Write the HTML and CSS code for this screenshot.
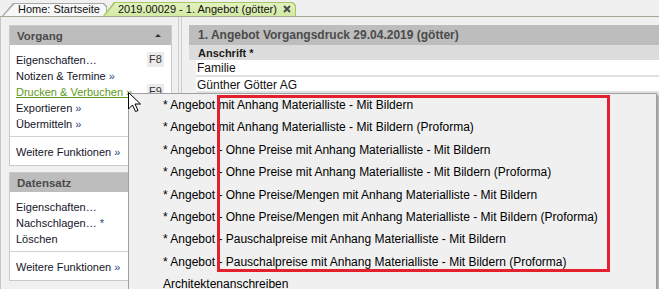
FILE: index.html
```html
<!DOCTYPE html>
<html lang="de">
<head>
    <meta charset="UTF-8">
    <title>2019.00029 - 1. Angebot (götter)</title>
    <link rel="stylesheet" href="styles.css">
</head>
<body>
    <div class="tabs">
        <div class="tab">Home: Startseite</div>
        <div class="tab tab-active">2019.00029 - 1. Angebot (götter)
            <svg class="tab-close" width="8" height="8" viewBox="0 0 8 8"><path d="M1 1 L7 7 M7 1 L1 7" stroke="#4a4a4a" stroke-width="2"/></svg>
        </div>
    </div>

    <div class="main">
        <div class="sidebar">
            <div class="box">
                <div class="box-head">Vorgang <span class="collapse"></span></div>
                <ul class="box-list">
                    <li>Eigenschaften… <span class="key">F8</span></li>
                    <li>Notizen &amp; Termine <span class="more">»</span></li>
                    <li class="hover">Drucken &amp; Verbuchen »<span class="key">F9</span></li>
                    <li>Exportieren <span class="more">»</span></li>
                    <li>Übermitteln <span class="more">»</span></li>
                </ul>
                <ul class="box-list box-foot">
                    <li>Weitere Funktionen <span class="more">»</span></li>
                </ul>
            </div>
            <div class="box">
                <div class="box-head">Datensatz</div>
                <ul class="box-list">
                    <li>Eigenschaften…</li>
                    <li>Nachschlagen… <span class="more">*</span></li>
                    <li>Löschen</li>
                </ul>
                <ul class="box-list box-foot">
                    <li>Weitere Funktionen <span class="more">»</span></li>
                </ul>
            </div>
        </div>

        <div class="content">
            <div class="pane-head">1. Angebot Vorgangsdruck 29.04.2019 (götter)</div>
            <div class="field-label">Anschrift *</div>
            <div class="fields">
                <div class="field">Familie</div>
                <div class="field">Günther Götter AG</div>
            </div>
        </div>
    </div>

    <!-- Kontextmenü "Drucken & Verbuchen" -->
    <ul class="menu">
        <li>* Angebot mit Anhang Materialliste - Mit Bildern</li>
        <li>* Angebot mit Anhang Materialliste - Mit Bildern (Proforma)</li>
        <li>* Angebot - Ohne Preise mit Anhang Materialliste - Mit Bildern</li>
        <li>* Angebot - Ohne Preise mit Anhang Materialliste - Mit Bildern (Proforma)</li>
        <li>* Angebot - Ohne Preise/Mengen mit Anhang Materialliste - Mit Bildern</li>
        <li>* Angebot - Ohne Preise/Mengen mit Anhang Materialliste - Mit Bildern (Proforma)</li>
        <li>* Angebot - Pauschalpreise mit Anhang Materialliste - Mit Bildern</li>
        <li>* Angebot - Pauschalpreise mit Anhang Materialliste - Mit Bildern (Proforma)</li>
        <li>Architektenanschreiben</li>
    </ul>

    <div class="highlight"></div>

    <svg class="cursor" width="13" height="21" viewBox="0 0 13 21">
        <path d="M0.5 0.5 L0.5 17 L4.5 13 L7.5 19.5 L10 18.5 L7 12 L12.5 12 Z" fill="#fff" stroke="#000" stroke-width="1" stroke-linejoin="miter"/>
    </svg>
</body>
</html>
```

FILE: styles.css
```css
body {
    margin: 0;
    width: 659px;
    height: 289px;
    overflow: hidden;
    position: relative;
    background-color: #f0f0f0;
    font-family: "Liberation Sans", Arial, sans-serif;
    font-size: 11px;
    color: #111;
}

ul {
    list-style: none;
    margin: 0;
    padding: 0;
}

/* Tabs */
.tabs {
    height: 16px;
    border-bottom: 1px solid #a9a596;
    display: flex;
    align-items: flex-end;
    padding-left: 2px;
}

.tab {
    position: relative;
    z-index: 0;
    height: 13px;
    line-height: 13px;
    padding: 0 7px 0 16px;
    white-space: nowrap;
}

.tab::before,
.tab::after {
    content: "";
    position: absolute;
    z-index: -1;
    clip-path: polygon(0 100%, 11px 0, calc(100% - 3px) 0, 100% 3px, 100% 100%);
}

.tab::before {
    inset: 0 0 0 0;
    background-color: #a7a7a7;
}

.tab::after {
    inset: 1px 1px 0 1.5px;
    background-color: #f8f8f8;
}

.tab-active {
    height: 14px;
    line-height: 15px;
    margin-left: -4px;
    padding: 0 5px 0 15px;
}

.tab-active::before {
    background-color: #a4c760;
}

.tab-active::after {
    background: linear-gradient(#e2f2c0, #d3eaa4);
}

.tab-close {
    margin-left: 3px;
    vertical-align: 0;
}

/* Layout */
.main {
    display: flex;
    height: 272px;
}

.sidebar {
    width: 179px;
    box-sizing: border-box;
    border-left: 1px solid #c6c6c6;
    border-right: 1px solid #cdcdcd;
    padding: 8px 0 0 8px;
}

.box {
    width: 163px;
    box-sizing: border-box;
    background-color: #fff;
    border: 1px solid #c9c9c9;
    margin-bottom: 6px;
}

.box-head {
    position: relative;
    height: 19px;
    line-height: 20px;
    background-color: #bdbdbd;
    padding-left: 7px;
    font-size: 11.5px;
    font-weight: bold;
    color: #4b4b4b;
}

.collapse {
    position: absolute;
    right: 10px;
    top: 8px;
    border-left: 3px solid transparent;
    border-right: 3px solid transparent;
    border-bottom: 3px solid #333;
}

.box-list {
    padding: 7px 0 4px 0;
}

.box-list li {
    position: relative;
    height: 16px;
    line-height: 16px;
    padding-left: 6px;
    color: #141428;
}

.box-foot {
    border-top: 1px solid #d2d2d2;
    padding-bottom: 5px;
}

.more {
    color: #2b4585;
}

.box-list .hover {
    color: #5d9a1a;
    text-decoration: underline;
}

.key {
    position: absolute;
    right: 7px;
    top: 0;
    width: 17px;
    height: 15px;
    line-height: 15px;
    text-align: center;
    background-color: #ebebeb;
    color: #333;
    text-decoration: none;
}

.content {
    flex: 1;
    margin-left: 2px;
    border-left: 1px solid #d0d0d0;
    padding: 8px 0 0 7px;
}

.pane-head {
    height: 20px;
    line-height: 21px;
    background-color: #bdbdbd;
    padding-left: 9px;
    font-size: 12px;
    font-weight: bold;
    color: #4b4b4b;
    white-space: nowrap;
}

.field-label {
    height: 15px;
    line-height: 16px;
    background-color: #dcdcdc;
    padding-left: 9px;
    font-weight: bold;
    color: #1c1c1c;
}

.fields {
    margin-left: 7px;
    background-color: #e1e1e1;
    padding-bottom: 3px;
}

.field {
    height: 15px;
    line-height: 16px;
    background-color: #fff;
    padding-left: 1px;
    font-size: 12px;
    margin-bottom: 2px;
}

.field:last-child {
    height: 14px;
    margin-bottom: 0;
}

/* Kontextmenü */
.menu {
    position: absolute;
    left: 128px;
    top: 93px;
    width: 529px;
    height: 210px;
    box-sizing: border-box;
    background-color: #f0f0f0;
    border: 1px solid #a0a0a0;
    box-shadow: 2px 2px 2px rgba(0, 0, 0, 0.35);
    font-size: 12px;
    color: #000;
}

.menu li {
    height: 22.4px;
    line-height: 22.4px;
    padding-left: 34px;
    white-space: nowrap;
}

.highlight {
    position: absolute;
    left: 217px;
    top: 95px;
    width: 393px;
    height: 177px;
    box-sizing: border-box;
    border: 3px solid #e3202b;
}

.cursor {
    position: absolute;
    left: 128px;
    top: 92px;
}
```
